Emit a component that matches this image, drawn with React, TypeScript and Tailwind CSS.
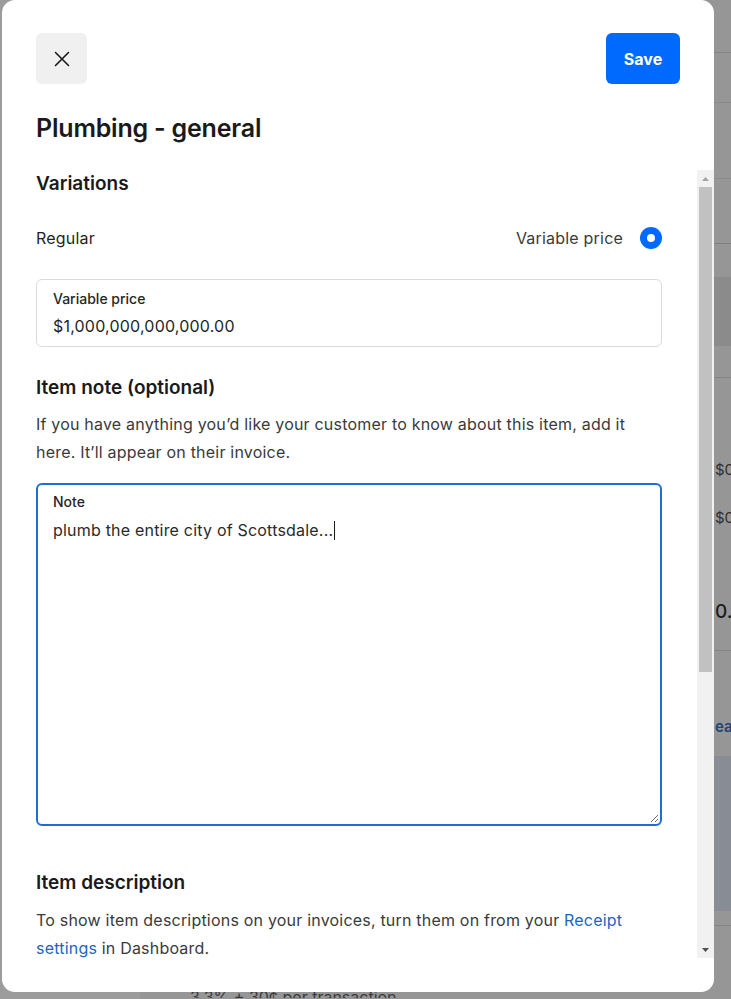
import React from 'react';

// Background page rows (only a thin strip of it is visible behind the dialog)
const BgRow = ({ h, className = '', children }: { h: string; className?: string; children?: React.ReactNode }) => (
  <div className={`${h} shrink-0 pl-[575px] whitespace-nowrap overflow-hidden ${className}`}>{children}</div>
);

const Background = () => (
  <div className="flex h-full w-full">
    <div className="w-[140px] shrink-0 bg-[#9c9c9c]" />
    <div className="flex flex-1 flex-col bg-[#969696]">
      <BgRow h="h-[53px]" className="border-b border-[#858585]" />
      <BgRow h="h-[50px]" className="border-b border-[#8a8a8a]" />
      <BgRow h="h-[76px]" className="border-b border-[#8a8a8a]" />
      <BgRow h="h-[65px]" className="border-b border-[#7e7e7e]" />
      <BgRow h="h-[33px]" />
      <BgRow h="h-[69px]" className="bg-[#8b8b8b]" />
      <BgRow h="h-[32px]" className="border-b border-[#848484]" />
      <BgRow h="h-[273px]" className="border-b border-[#848484] text-[15px] text-[#2f2f2f]">
        <div className="pt-[81px] leading-[22px]">$0.00</div>
        <div className="mt-[26px] leading-[22px]">$0.00</div>
        <div className="mt-[70px] text-[19px] font-medium leading-[26px] text-[#1d1d1d]">0.00</div>
      </BgRow>
      <BgRow h="h-[105px]" className="text-[15px] font-semibold text-[#1f4479]">
        <div className="pt-[65px] leading-[22px]">earn more</div>
      </BgRow>
      <BgRow h="h-[155px]" className="bg-[#878c95]" />
      <BgRow h="h-[15px]" className="border-b border-[#868686]" />
      <BgRow h="h-[65px]" />
      <div className="h-[7px] shrink-0 overflow-hidden pl-[50px] whitespace-nowrap text-[16px] leading-[20px] text-[#3a3a3a]">
        <div className="-mt-[4px]">3.3% + 30¢ per transaction.</div>
      </div>
    </div>
  </div>
);

const Scrollbar = () => (
  <div className="flex w-[17px] shrink-0 flex-col bg-[#f1f1f1]">
    <div className="flex h-[17px] items-center justify-center">
      <svg width="7" height="4" viewBox="0 0 7 4"><path d="M3.5 0 7 4H0z" fill="#a3a3a3" /></svg>
    </div>
    <div className="mx-[2px] h-[485px] bg-[#c1c1c1]" />
    <div className="flex-1" />
    <div className="flex h-[17px] items-center justify-center">
      <svg width="7" height="4" viewBox="0 0 7 4"><path d="M0 0h7L3.5 4z" fill="#505050" /></svg>
    </div>
  </div>
);

export default function App() {
  return (
    <div className="relative h-[999px] w-[731px] overflow-hidden font-['Inter','Noto_Sans',sans-serif]">
      <Background />

      {/* Dialog */}
      <div className="absolute left-[2px] top-0 flex h-[992px] w-[712px] flex-col rounded-[13px] bg-white">
        {/* Header */}
        <div className="px-[34px] pt-[33px]">
          <div className="flex items-center justify-between">
            <button className="flex h-[51px] w-[51px] items-center justify-center rounded-[6px] bg-[#f0f0f0]">
              <svg width="16" height="16" viewBox="0 0 16 16">
                <path d="M1.5 1.5l13 13M14.5 1.5l-13 13" stroke="#1a1a1a" strokeWidth="1.6" strokeLinecap="round" />
              </svg>
            </button>
            <button className="h-[51px] w-[74px] rounded-[6px] bg-[#006aff] text-[16px] font-bold text-white">
              Save
            </button>
          </div>
          <h1 className="mt-[28px] mb-[26px] text-[25px] font-semibold leading-[32px] tracking-[-0.2px] text-[#1a1a1a]">
            Plumbing - general
          </h1>
        </div>

        {/* Scrollable body */}
        <div className="flex h-[788px] shrink-0">
          <div className="flex-1 overflow-hidden pl-[34px] pr-[35px]">
            <h2 className="text-[19px] font-semibold leading-[28px] text-[#1a1a1a]">Variations</h2>

            <div className="mt-[26px] flex h-[28px] items-center justify-between text-[16px] tracking-[0.2px]">
              <span className="text-[#1f1f1f]">Regular</span>
              <div className="flex items-center">
                <span className="text-[#3a3a3a]">Variable price</span>
                <span className="ml-[17px] flex h-[22px] w-[22px] items-center justify-center rounded-full bg-[#006aff]">
                  <span className="h-[8px] w-[8px] rounded-full bg-white" />
                </span>
              </div>
            </div>

            <div className="mt-[27px] h-[68px] rounded-[6px] border border-[#dadada] px-[16px] pt-[9px]">
              <div className="text-[14px] font-medium leading-[20px] text-[#262626]">Variable price</div>
              <div className="mt-[5px] text-[16px] leading-[24px] tracking-[0.2px] text-[#1f1f1f]">$1,000,000,000,000.00</div>
            </div>

            <h2 className="mt-[27px] text-[19px] font-semibold leading-[28px] text-[#1a1a1a]">Item note (optional)</h2>
            <p className="mt-[8px] text-[16px] leading-[28px] tracking-[0.2px] text-[#3a3a3a]">
              If you have anything you’d like your customer to know about this item, add it here. It’ll appear on
              their invoice.
            </p>

            <div className="relative mt-[17px] h-[343px] rounded-[6px] border-2 border-[#1c6fd8] px-[15px] pt-[7px]">
              <div className="text-[14px] font-medium leading-[20px] text-[#262626]">Note</div>
              <div className="mt-[6px] flex items-center text-[16px] leading-[24px] tracking-[0.2px] text-[#2a2a2a]">
                plumb the entire city of Scottsdale...
                <span className="ml-[1px] inline-block h-[19px] w-[1px] bg-[#1a1a1a]" />
              </div>
              <svg className="absolute bottom-[1px] right-[1px]" width="10" height="10" viewBox="0 0 10 10">
                <path d="M9 2 2 9M9 6 6 9" stroke="#6b6b6b" strokeWidth="1" />
              </svg>
            </div>

            <h2 className="mt-[43px] text-[19px] font-semibold leading-[28px] text-[#1a1a1a]">Item description</h2>
            <p className="mt-[9px] text-[16px] leading-[28px] tracking-[0.2px] text-[#3a3a3a]">
              To show item descriptions on your invoices, turn them on from your{' '}
              <a className="text-[#1b64c4]">Receipt settings</a> in Dashboard.
            </p>

            <h2 className="mt-[40px] text-[19px] font-semibold leading-[28px] text-[#1a1a1a]">Item options</h2>
          </div>
          <Scrollbar />
        </div>
      </div>
    </div>
  );
}
